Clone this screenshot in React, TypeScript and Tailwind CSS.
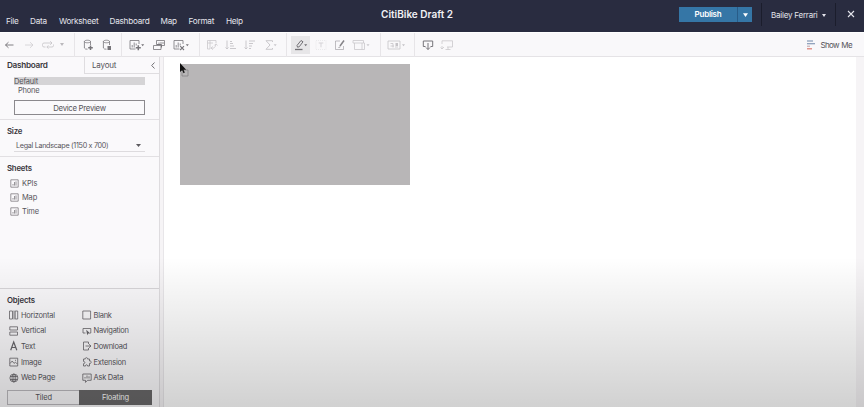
import React from "react";

type IconProps = { children: React.ReactNode; className?: string; w?: number };

function Icon({ children, className = "", w = 14 }: IconProps) {
  return (
    <svg
      width={w}
      height={14}
      viewBox={`0 0 ${w} 14`}
      fill="none"
      stroke="currentColor"
      strokeWidth={0.8}
      className={`shrink-0 ${className}`}
    >
      {children}
    </svg>
  );
}

const menu = [
  { label: "File", cell: "w-[24px]" },
  { label: "Data", cell: "w-[29px]" },
  { label: "Worksheet", cell: "w-[50.5px]" },
  { label: "Dashboard", cell: "w-[51px]" },
  { label: "Map", cell: "w-[28px]" },
  { label: "Format", cell: "w-[37.5px]" },
  { label: "Help", cell: "w-[24px]" },
];

function Header() {
  return (
    <header className="flex h-8 shrink-0 bg-[#292c40] text-[#e4e5ec]">
      <nav className="flex w-[340px] pl-[6px] pt-[15px] text-[8.2px] leading-3 tracking-[-0.25px]">
        {menu.map((m) => (
          <span key={m.label} className={`${m.cell} whitespace-nowrap`}>
            {m.label}
          </span>
        ))}
      </nav>
      <h1 className="w-[154px] pt-[7px] text-center text-[10px] leading-[14px] font-semibold text-[#f1f1f5]">
        CitiBike Draft 2
      </h1>
      <div className="ml-auto flex w-[185px] pt-[3px]">
        <div className="mt-[4px] flex h-[15px] w-[73px] bg-[#3576a6] text-white">
          <button className="w-[59px] border-r border-[#285c88] text-[8px] leading-[15px] font-semibold tracking-[-0.25px]">
            Publish
          </button>
          <span className="flex flex-1 items-center justify-center">
            <svg width="5" height="4" viewBox="0 0 5 4">
              <path d="M0 .3H5L2.5 4Z" fill="currentColor" />
            </svg>
          </span>
        </div>
        <div className="ml-[9px] flex h-[23px] w-[75px] items-center border-x border-[#1b1d2c] pl-[9px] text-[8px] leading-3 whitespace-nowrap">
          <span className="tracking-[-0.22px]">Bailey Ferrari</span>
          <svg width="4" height="3" viewBox="0 0 4 3" className="mt-[1px] ml-[4px]">
            <path d="M0 0H4L2 3Z" fill="currentColor" />
          </svg>
        </div>
        <svg width="8" height="8" viewBox="0 0 8 8" className="mt-[7px] ml-[11px]" stroke="currentColor" strokeWidth="1.1">
          <path d="M1 1 7 7M7 1 1 7" />
        </svg>
      </div>
    </header>
  );
}

const chartBox = <path d="M11 6V2.5H2V11H7.5M4.2 9.5V7M6.2 9.5V4.5M8.2 7.5V5.5" />;

const caret = (x: number) => <path d={`M${x} 6.3h3l-1.5 2Z`} fill="currentColor" stroke="none" />;

function Divider() {
  return <span className="h-[24px] w-px shrink-0 bg-[#e7e5e8]" />;
}

function Toolbar() {
  return (
    <div className="flex h-[25px] shrink-0 items-center border-t border-b border-t-white border-b-[#e5e3e6] bg-[#f9f8fa] text-[#77757a]">
      <div className="flex w-[74px] items-center pl-[3px]">
        <Icon className="text-[#626065]">
          <path d="M2.5 7H10.5M5.5 4.2 2.5 7 5.5 9.8" />
        </Icon>
        <Icon className="ml-[5px] text-[#d0ced2]">
          <path d="M3 7H11M8 4.2 11 7 8 9.8" />
        </Icon>
        <Icon className="ml-[5px] text-[#c5c3c7]">
          <path d="M4.5 9H3Q1.5 9 1.5 7.5V6.5Q1.5 5 3 5H11M9.2 3.2 11 5 9.2 6.8M6 9H11Q12.5 9 12.5 7.5V6.5M7.4 7.4 5.8 9 7.4 10.6" />
        </Icon>
        <svg width="4" height="3" viewBox="0 0 4 3" className="ml-[5px] text-[#bbb9bd]">
          <path d="M0 0H4L2 3Z" fill="currentColor" />
        </svg>
      </div>
      <Divider />
      <div className="flex w-[46px] items-center gap-[5px] pl-[6px]">
        <Icon>
          <path d="M3.4 3.5V10Q4 11.4 6.5 11.2M9.5 7V3.5M3.4 3.5C3.4 1.8 9.5 1.8 9.5 3.5S3.4 5.2 3.4 3.5" />
          <path d="M9.5 7.5V12M7.2 9.8H11.8" strokeWidth="1.5" />
        </Icon>
        <Icon>
          <path d="M3.4 3.5V10Q4 11.4 6.5 11.2M9.5 7V3.5M3.4 3.5C3.4 1.8 9.5 1.8 9.5 3.5S3.4 5.2 3.4 3.5" />
          <path d="M7.5 8H11V12H7.5Z" fill="currentColor" stroke="none" />
        </Icon>
      </div>
      <Divider />
      <div className="flex w-[77px] items-center pl-[6px]">
        <Icon w={18}>
          {chartBox}
          <path d="M10.3 7.3V12.3M7.8 9.8H12.8" strokeWidth="1.5" />
          {caret(13.2)}
        </Icon>
        <Icon w={14} className="ml-[6px]">
          <path d="M4.5 6.5V2.5H12.5V7.5H9.5M7 6V4.5M9 6V4M11 6V4M1.5 7.5H9V11.5H1.5Z" />
          <path d="M4.5 6.5H9.5V9.5" strokeWidth="1" />
        </Icon>
        <Icon w={18} className="ml-[6px]">
          {chartBox}
          <path d="M8.2 8.2 12 12M12 8.2 8.2 12" strokeWidth="1.1" />
          {caret(13.8)}
        </Icon>
      </div>
      <Divider />
      <div className="flex w-[86px] items-center pl-[5px] text-[#cac8cc]">
        <Icon>
          <path d="M2.5 2.5H11V5M2.5 2.5V11H5V2.5M2.5 5H8M6 10Q10 11.5 11 6M9.3 7.5 11 5.8 12.5 7.5M8 8.5 6 10 7.8 11.8" />
        </Icon>
        <Icon className="ml-[5px]">
          <path d="M3 2.5V11M1.5 9.5 3 11 4.5 9.5M6 3.5H8M6 5.5H9M6 8H10M6 10.5H12" strokeWidth="1" />
        </Icon>
        <Icon className="ml-[5px]">
          <path d="M3 2.5V11M1.5 9.5 3 11 4.5 9.5M6 3H12M6 5.5H10M6 8H9M6 10.5H8" strokeWidth="1" />
        </Icon>
        <Icon w={17} className="ml-[6px]">
          <path d="M9.5 4V2.7H3L7 7 3 11.3H9.5V10" strokeWidth="1" />
          {caret(10.7)}
        </Icon>
      </div>
      <Divider />
      <div className="flex w-[93px] items-center pl-[4px] text-[#cac8cc]">
        <span className="flex h-[18px] w-[19px] items-center justify-center bg-[#e7e6e8] text-[#727075]">
          <Icon w={15}>
            <path d="M8 2.5 4 7.5 4.5 9.2 6.2 8.8 10 3.8Z" strokeWidth="1" />
            <path d="M2 11.5H9.5" strokeWidth="1.3" />
            {caret(11.2)}
          </Icon>
        </span>
        <Icon className="ml-[4px] text-[#d5d3d7]">
          <path d="M2 2.5H12V11.5H2Z" strokeDasharray="1 1" strokeWidth=".4" />
          <path d="M4.7 5H9.3M7 5V9.3" strokeWidth="1" />
        </Icon>
        <Icon className="ml-[5px] text-[#858388]">
          <path d="M7 3H2.5V11.5H10.5V8" strokeWidth=".5" />
          <path d="M11 2.5 7 8" strokeWidth="1.5" />
          <path d="m5.5 9.5 1.8-.6" />
        </Icon>
        <Icon w={19} className="ml-[5px]">
          <path d="M1 2.5H11.5V5H1ZM2.5 5V11.5H12.5V5H11.5M10 5V11.5" />
          {caret(14.5)}
        </Icon>
      </div>
      <Divider />
      <div className="flex w-[33px] items-center pl-[6px] text-[#c5c3c7]">
        <Icon w={19}>
          <path d="M1 3H13V11H1ZM3.5 8H7M3.5 5.5H6V9.5M9.5 5V8M8 9H11" />
          <path d="M8.5 5H11V8H8.5Z" fill="currentColor" stroke="none" />
          {caret(15)}
        </Icon>
      </div>
      <Divider />
      <div className="flex items-center gap-[5px] pl-[6px]">
        <Icon>
          <path d="M4.5 8.5H2.3V3H11.7V8.5H9.5M7 5V11.5M5 9.5 7 11.5 9 9.5" strokeWidth="1" />
        </Icon>
        <Icon className="text-[#cac8cc]">
          <path d="M2 6V2.8H12.5V9H7M8 9V11.5M5.5 11.5H10.5M2 8V11M.5 9.5 2 11 4 9" />
        </Icon>
      </div>
      <div className="mr-[12px] ml-auto flex items-center">
        <svg width="10" height="10" viewBox="0 0 10 10" className="mr-[4px]">
          <path d="M1 1H7M1 3.8H9" stroke="#7088aa" strokeWidth="1.1" />
          <path d="M1 6.2H4" stroke="#bca2a9" strokeWidth="1" />
          <path d="M1 8.8H6" stroke="#dc7a70" strokeWidth="1.2" />
        </svg>
        <span className="text-[8px] leading-3 tracking-[-0.6px] [word-spacing:0.6px] text-[#555359]">Show Me</span>
      </div>
    </div>
  );
}

const sheets = ["KPIs", "Map", "Time"];

const objects: { label: string; art: React.ReactNode }[] = [
  { label: "Horizontal", art: <path d="M2.5 3H5.5V11H2.5ZM7 2.5V11.5M8.2 3H10.7V11H8.2Z" /> },
  { label: "Blank", art: <path d="M2.8 3H10.6V11H2.8Z" /> },
  { label: "Vertical", art: <path d="M2.8 2.8H10.5V6H2.8ZM2.8 8H10.5V11.2H2.8Z" /> },
  {
    label: "Navigation",
    art: (
      <>
        <path d="M5.5 9H3V4.5H10.8V9H10" />
        <path d="m6.2 5.7 1 5.6 1-1.7 2.2-.2Z" fill="currentColor" stroke="none" />
      </>
    ),
  },
  { label: "Text", art: <path d="M3.7 11.2 6.7 3 9.8 11.2M4.8 8.5H8.7" strokeWidth="1.2" /> },
  { label: "Download", art: <path d="M8.5 5V3H3.5V11H8.5V9M5.5 7H11M9 5.2 11 7 9 8.8" /> },
  { label: "Image", art: <path d="M2.8 3.2H10.7V11H2.8ZM3 8.5 5.2 6 7 8.4 8.5 7.2 10.3 9M8 5.3H9" /> },
  {
    label: "Extension",
    art: <path d="M3.5 4H5.3C4.8 2.2 8 2.2 7.5 4H9.5V6C11.8 5.3 11.8 9 9.5 8.4V11H7.5C7.8 9.3 5.3 9.3 5.6 11H3.5V8.7C5.3 8.8 5.3 6.3 3.5 6.4Z" />,
  },
  {
    label: "Web Page",
    art: (
      <>
        <circle cx="6.9" cy="7" r="4" />
        <path d="M3 5.5H10.7M3 8.5H10.7M6.9 3V11" />
        <ellipse cx="6.9" cy="7" rx="1.9" ry="4" />
      </>
    ),
  },
  { label: "Ask Data", art: <path d="M2.8 3H11.2V9.3H7.5L5.5 11.4V9.3H2.8ZM5 7.5V6M7 7.5V4.5M9 7.5V5.3" /> },
];

function Sidebar() {
  return (
    <aside className="flex w-[160px] shrink-0 flex-col border-r border-[#dedcdf] bg-[#faf9fb] text-[8px] leading-3 text-[#56545a]">
      <div className="flex h-[17px] shrink-0">
        <h2 className="w-[84px] pt-[2px] pl-[7px] text-[8.2px] font-semibold tracking-[-0.3px] text-[#38363c]">Dashboard</h2>
        <div className="flex flex-1 items-start border-b border-l border-[#dfdde0] pt-[2px] pl-[7px] tracking-[-0.2px]">
          Layout
          <svg width="4" height="7" viewBox="0 0 4 7" className="mt-[3px] mr-[4px] ml-auto" fill="none" stroke="#716f74">
            <path d="M3.5.5.7 3.5 3.5 6.5" />
          </svg>
        </div>
      </div>
      <section className="h-[46px] shrink-0 border-b border-[#e2e0e3] px-[14px] pt-[3px] text-[7.5px] tracking-[-0.2px]">
        <div className="h-[8px] w-[131px] bg-[#d5d4d6] leading-[9px]">Default</div>
        <div className="h-[9px] pl-[4px] leading-[11px]">Phone</div>
        <button className="mt-[6px] block h-[15px] w-[131px] border border-[#8b898d] text-[7.8px] leading-[14px] tracking-[-0.3px]">
          Device Preview
        </button>
      </section>
      <section className="h-[37px] shrink-0 border-b border-[#e2e0e3] pt-[5px] pl-[7px]">
        <h2 className="text-[7.8px] font-semibold tracking-[-0.2px] text-[#38363c]">Size</h2>
        <div className="mt-[3px] ml-[7px] flex h-[12px] w-[131px] items-center border-b border-[#dddbde] pl-[2px] text-[7.2px]">
          <span className="pt-px tracking-[-0.3px] whitespace-nowrap">Legal Landscape (1150 x 700)</span>
          <svg width="5" height="3" viewBox="0 0 5 3" className="mr-[4px] ml-auto">
            <path d="M0 0H5L2.5 3Z" fill="#5c5a5f" />
          </svg>
        </div>
      </section>
      <section className="min-h-0 flex-1 border-b border-[#d8d6d9] pt-[5px] pl-[7px]">
        <h2 className="text-[7.8px] font-semibold tracking-[-0.2px] text-[#38363c]">Sheets</h2>
        <ul className="mt-[2px] pl-[3px]">
          {sheets.map((s) => (
            <li key={s} className="flex h-[14px] items-center text-[7.5px] tracking-[-0.15px]">
              <svg width="9" height="9" viewBox="0 0 9 9" className="mr-[3px] text-[#7d7b80]" fill="none" stroke="currentColor" strokeWidth=".8">
                <path d="M.8.8H8.2V8.2H.8ZM3 6.6V5M4.5 6.6V3M6 6.6V2.4" />
              </svg>
              <span className="pt-[2px]">{s}</span>
            </li>
          ))}
        </ul>
      </section>
      <section className="h-[118px] shrink-0 pt-[5px] pl-[7px]">
        <h2 className="text-[7.8px] font-semibold tracking-[-0.15px] text-[#38363c]">Objects</h2>
        <div className="mt-[1px] grid auto-rows-[15.6px] grid-cols-[72.5px_78px]">
          {objects.map((o) => (
            <div key={o.label} className="flex items-center pt-px text-[7.5px] tracking-[-0.25px] whitespace-nowrap">
              <Icon className="text-[#68666b]">{o.art}</Icon>
              <span className="pt-px">{o.label}</span>
            </div>
          ))}
        </div>
        <div className="mt-[5px] flex h-[15px] w-[145px] border border-[#bcbabe] text-center text-[7.5px] leading-[14px] tracking-[-0.15px]">
          <span className="w-[71px]">Tiled</span>
          <span className="-my-px -mr-px flex-1 bg-[#696869] leading-[16px] text-white">Floating</span>
        </div>
      </section>
    </aside>
  );
}

export default function App() {
  return (
    <div className="relative flex h-[407px] w-[864px] flex-col overflow-hidden bg-[#f6f4f6] font-['Inter','Liberation_Sans',sans-serif]">
      <Header />
      <Toolbar />
      <div className="flex min-h-0 flex-1">
        <Sidebar />
        <main className="relative ml-[3px] w-[693px] border-l border-[#e8e6e9] bg-white pt-[6.5px] pl-[16px]">
          <div className="h-[121px] w-[230px] bg-[#b8b6b7]" />
          <svg width="12" height="16" viewBox="0 0 12 16" className="absolute top-[5px] left-[15px]">
            <path d="M4.5 8H9V14H3V10" fill="none" stroke="#858385" strokeWidth=".8" />
            <path d="M1 1V10L3.1 8.2 4.6 11.2 5.8 10.5 4.5 7.8H7.2Z" fill="#111" />
          </svg>
        </main>
      </div>
      <div className="pointer-events-none absolute inset-x-0 bottom-0 h-[150px] bg-linear-to-b from-black/0 to-black/18" />
    </div>
  );
}
